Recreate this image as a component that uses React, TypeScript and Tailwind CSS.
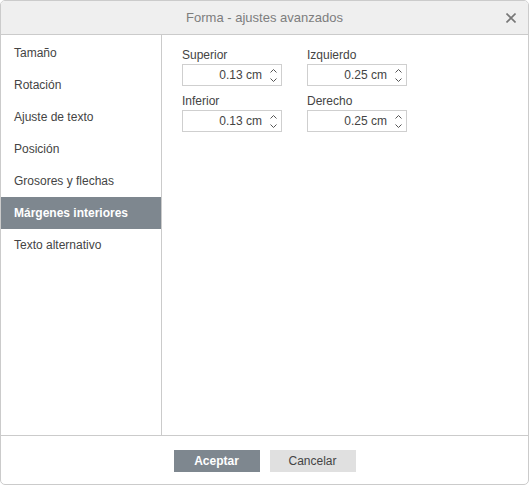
const MENU = [
  'Tamaño',
  'Rotación',
  'Ajuste de texto',
  'Posición',
  'Grosores y flechas',
  'Márgenes interiores',
  'Texto alternativo',
];

const FIELDS = [
  { label: 'Superior', value: '0.13 cm' },
  { label: 'Izquierdo', value: '0.25 cm' },
  { label: 'Inferior', value: '0.13 cm' },
  { label: 'Derecho', value: '0.25 cm' },
];

function Spinner() {
  return (
    <div className="flex flex-col items-center justify-center w-[16px] gap-[5px] text-[#555]">
      <svg width="7" height="4" viewBox="0 0 7 4" fill="none" stroke="currentColor" strokeWidth="1">
        <path d="M0.5 3.5 L3.5 0.5 L6.5 3.5" />
      </svg>
      <svg width="7" height="4" viewBox="0 0 7 4" fill="none" stroke="currentColor" strokeWidth="1">
        <path d="M0.5 0.5 L3.5 3.5 L6.5 0.5" />
      </svg>
    </div>
  );
}

export default function App() {
  const selected = 5;
  return (
    <div
      className="w-[529px] h-[485px] bg-white border border-[#cbcbcb] rounded-[5px] flex flex-col overflow-hidden text-[#444]"
      style={{ fontFamily: '"Liberation Sans", Arial, sans-serif' }}
    >
      {/* header */}
      <div className="relative h-[34px] bg-[#efefef] border-b border-[#cbcbcb] flex items-center justify-center shrink-0">
        <span className="text-[13px] text-[#7d7d7d]">Forma - ajustes avanzados</span>
        <svg
          className="absolute right-[12px] top-[12px]"
          width="10"
          height="10"
          viewBox="0 0 10 10"
          stroke="#777"
          strokeWidth="1.6"
        >
          <path d="M0.5 0.5 L9.5 9.5 M9.5 0.5 L0.5 9.5" />
        </svg>
      </div>

      {/* body */}
      <div className="flex flex-1 min-h-0">
        <div className="w-[161px] shrink-0 border-r border-[#cbcbcb] pt-[2px]">
          {MENU.map((item, i) => (
            <div
              key={item}
              className={
                i === selected
                  ? 'h-[32px] flex items-center pl-[13px] text-[12px] font-bold text-white bg-[#7e878f]'
                  : 'h-[32px] flex items-center pl-[13px] text-[12px] text-[#444]'
              }
            >
              {item}
            </div>
          ))}
        </div>

        <div className="flex-1 pl-[20px] pt-[13px]">
          <div className="grid grid-cols-[100px_100px] gap-x-[25px] gap-y-[8px]">
            {FIELDS.map((f) => (
              <div key={f.label} className="flex flex-col">
                <label className="text-[12px] leading-[14px] text-[#444] mb-[2px]">{f.label}</label>
                <div className="h-[22px] border border-[#cfcfcf] flex items-center justify-end">
                  <span className="text-[12px] text-[#444] pr-[3px]">{f.value}</span>
                  <Spinner />
                </div>
              </div>
            ))}
          </div>
        </div>
      </div>

      {/* footer */}
      <div className="h-[49px] shrink-0 border-t border-[#cbcbcb] flex items-center justify-center gap-[10px] pt-[2px]">
        <button className="w-[86px] h-[22px] bg-[#7e878f] text-white text-[12px] font-bold">Aceptar</button>
        <button className="w-[86px] h-[22px] bg-[#e0e0e0] text-[#444] text-[12px]">Cancelar</button>
      </div>
    </div>
  );
}
